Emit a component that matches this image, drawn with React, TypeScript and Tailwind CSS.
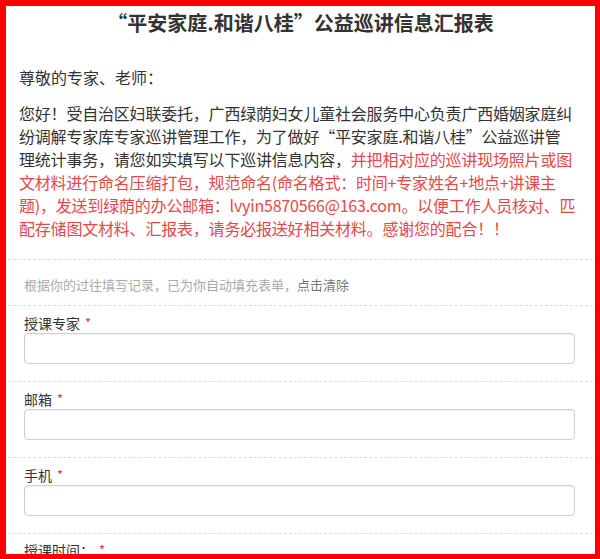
const CJK = "font-['Noto_Sans_CJK_SC',sans-serif]";

type Field = { label: string };

const fields: Field[] = [
  { label: "授课专家" },
  { label: "邮箱" },
  { label: "手机" },
];

function Required() {
  return <span className="ml-[5px] align-top text-[13px] leading-[20px] text-[#e4393c]">*</span>;
}

export default function App() {
  return (
    <div
      className={`h-[559px] w-[600px] overflow-hidden border-[6px] border-r-[5px] border-b-[5px] border-[#ff0000] bg-white text-[#333] ${CJK}`}
    >
      <h1 className="pt-[3px] text-center text-[20px] leading-[28px] font-bold text-[#333]">
        “平安家庭.和谐八桂”公益巡讲信息汇报表
      </h1>

      <div className="px-[13px]">
        <p className="mt-[29px] text-[16px] leading-[23px]">尊敬的专家、老师：</p>
        <p className="mt-[13px] whitespace-nowrap text-[16px] leading-[23px] tracking-[-0.2px]">
          您好！受自治区妇联委托，广西绿荫妇女儿童社会服务中心负责广西婚姻家庭纠
          <br />
          纷调解专家库专家巡讲管理工作，为了做好“平安家庭.和谐八桂”公益巡讲管
          <br />
          理统计事务，请您如实填写以下巡讲信息内容，
          <span className="text-[#e8474a]">
            并把相对应的巡讲现场照片或图
            <br />
            文材料进行命名压缩打包，规范命名(命名格式：时间+专家姓名+地点+讲课主
            <br />
            题)，发送到绿荫的办公邮箱：lvyin5870566@163.com。以便工作人员核对、匹
            <br />
            配存储图文材料、汇报表，请务必报送好相关材料。感谢您的配合！！
          </span>
        </p>
      </div>

      <div className="mx-[2px] mt-[19px]">
        <div className="border-t border-dashed border-[#dcdcdc] pt-[15px] pb-[10px] pl-[16px] text-[13px] leading-[20px] text-[#aaa]">
          根据你的过往填写记录，已为你自动填充表单，
          <span className="text-[#777]">点击清除</span>
        </div>

        {fields.map((field) => (
          <div
            key={field.label}
            className="border-t border-dashed border-[#dcdcdc] pt-[7px] pb-[17px] pl-[16px] pr-[18px]"
          >
            <label className="flex h-[20px] items-start text-[14px] leading-[20px] text-[#333]">
              {field.label}
              <Required />
            </label>
            <input
              type="text"
              className="block h-[31px] w-full rounded-[4px] border border-[#cfcfcf] bg-white px-2 shadow-[inset_0_1px_2px_rgba(0,0,0,0.06)] outline-none"
            />
          </div>
        ))}

        <div className="border-t border-dashed border-[#dcdcdc] pt-[6px] pl-[16px]">
          <label className="flex h-[20px] items-start text-[14px] leading-[20px] text-[#333]">
            授课时间：
            <Required />
          </label>
        </div>
      </div>
    </div>
  );
}
